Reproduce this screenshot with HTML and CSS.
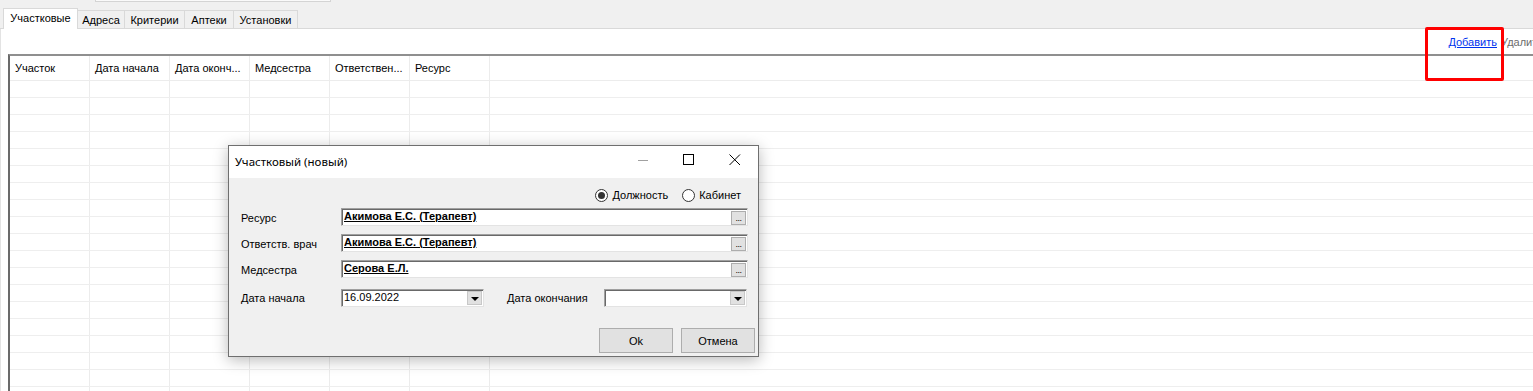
FILE: index.html
```html
<!DOCTYPE html>
<html lang="ru">
<head>
<meta charset="utf-8">
<title>Участковые</title>
<link rel="stylesheet" href="styles.css">
</head>
<body>
<div class="top">
  <div class="frag"></div>
  <div class="tabs">
    <div class="tab active">Участковые</div>
    <div class="tab w47">Адреса</div>
    <div class="tab w60">Критерии</div>
    <div class="tab w49">Аптеки</div>
    <div class="tab w64">Установки</div>
  </div>
</div>
<div class="page">
  <div class="toolbar">
    <a class="link" href="#">Добавить</a>
    <span class="link-dis">Удалить</span>
  </div>
  <div class="grid">
    <div class="row head">
      <div class="cell">Участок</div>
      <div class="cell">Дата начала</div>
      <div class="cell">Дата оконч...</div>
      <div class="cell">Медсестра</div>
      <div class="cell">Ответствен...</div>
      <div class="cell">Ресурс</div>
      <div class="fill"></div>
    </div>
    <div class="row"><div class="cell"></div><div class="cell"></div><div class="cell"></div><div class="cell"></div><div class="cell"></div><div class="cell"></div><div class="fill"></div></div>
    <div class="row"><div class="cell"></div><div class="cell"></div><div class="cell"></div><div class="cell"></div><div class="cell"></div><div class="cell"></div><div class="fill"></div></div>
    <div class="row"><div class="cell"></div><div class="cell"></div><div class="cell"></div><div class="cell"></div><div class="cell"></div><div class="cell"></div><div class="fill"></div></div>
    <div class="row"><div class="cell"></div><div class="cell"></div><div class="cell"></div><div class="cell"></div><div class="cell"></div><div class="cell"></div><div class="fill"></div></div>
    <div class="row"><div class="cell"></div><div class="cell"></div><div class="cell"></div><div class="cell"></div><div class="cell"></div><div class="cell"></div><div class="fill"></div></div>
    <div class="row"><div class="cell"></div><div class="cell"></div><div class="cell"></div><div class="cell"></div><div class="cell"></div><div class="cell"></div><div class="fill"></div></div>
    <div class="row"><div class="cell"></div><div class="cell"></div><div class="cell"></div><div class="cell"></div><div class="cell"></div><div class="cell"></div><div class="fill"></div></div>
    <div class="row"><div class="cell"></div><div class="cell"></div><div class="cell"></div><div class="cell"></div><div class="cell"></div><div class="cell"></div><div class="fill"></div></div>
    <div class="row"><div class="cell"></div><div class="cell"></div><div class="cell"></div><div class="cell"></div><div class="cell"></div><div class="cell"></div><div class="fill"></div></div>
    <div class="row"><div class="cell"></div><div class="cell"></div><div class="cell"></div><div class="cell"></div><div class="cell"></div><div class="cell"></div><div class="fill"></div></div>
    <div class="row"><div class="cell"></div><div class="cell"></div><div class="cell"></div><div class="cell"></div><div class="cell"></div><div class="cell"></div><div class="fill"></div></div>
    <div class="row"><div class="cell"></div><div class="cell"></div><div class="cell"></div><div class="cell"></div><div class="cell"></div><div class="cell"></div><div class="fill"></div></div>
    <div class="row"><div class="cell"></div><div class="cell"></div><div class="cell"></div><div class="cell"></div><div class="cell"></div><div class="cell"></div><div class="fill"></div></div>
    <div class="row"><div class="cell"></div><div class="cell"></div><div class="cell"></div><div class="cell"></div><div class="cell"></div><div class="cell"></div><div class="fill"></div></div>
    <div class="row"><div class="cell"></div><div class="cell"></div><div class="cell"></div><div class="cell"></div><div class="cell"></div><div class="cell"></div><div class="fill"></div></div>
    <div class="row"><div class="cell"></div><div class="cell"></div><div class="cell"></div><div class="cell"></div><div class="cell"></div><div class="cell"></div><div class="fill"></div></div>
    <div class="row"><div class="cell"></div><div class="cell"></div><div class="cell"></div><div class="cell"></div><div class="cell"></div><div class="cell"></div><div class="fill"></div></div>
    <div class="row"><div class="cell"></div><div class="cell"></div><div class="cell"></div><div class="cell"></div><div class="cell"></div><div class="cell"></div><div class="fill"></div></div>
    <div class="row"><div class="cell"></div><div class="cell"></div><div class="cell"></div><div class="cell"></div><div class="cell"></div><div class="cell"></div><div class="fill"></div></div>
  </div>
</div>

<div class="highlight"></div>

<div class="dialog">
  <div class="titlebar">
    <div class="title">Участковый (новый)</div>
    <div class="wbtn"><svg width="12" height="12" viewBox="0 0 12 12"><line x1="1" y1="6.5" x2="11" y2="6.5" stroke="#a0a0a0" stroke-width="1"/></svg></div>
    <div class="wbtn"><svg width="12" height="12" viewBox="0 0 12 12"><rect x="0.5" y="0.5" width="10" height="10" fill="none" stroke="#000" stroke-width="1"/></svg></div>
    <div class="wbtn"><svg width="12" height="12" viewBox="0 0 12 12"><path d="M0.5 0.5 L11 11 M11 0.5 L0.5 11" stroke="#000" stroke-width="1"/></svg></div>
  </div>
  <div class="dbody">
    <div class="radios">
      <span class="radio checked"></span><span class="rlabel">Должность</span>
      <span class="radio r2"></span><span class="rlabel">Кабинет</span>
    </div>
    <div class="frow">
      <div class="flabel">Ресурс</div>
      <div class="field"><span class="ftext">Акимова Е.С. (Терапевт)</span><span class="ellip">...</span></div>
    </div>
    <div class="frow">
      <div class="flabel">Ответств. врач</div>
      <div class="field"><span class="ftext">Акимова Е.С. (Терапевт)</span><span class="ellip">...</span></div>
    </div>
    <div class="frow">
      <div class="flabel">Медсестра</div>
      <div class="field"><span class="ftext">Серова Е.Л.</span><span class="ellip">...</span></div>
    </div>
    <div class="drow">
      <div class="flabel mid">Дата начала</div>
      <div class="combo"><span class="ctext">16.09.2022</span><span class="drop"><i class="tri"></i></span></div>
      <div class="flabel mid l2">Дата окончания</div>
      <div class="combo"><span class="ctext"></span><span class="drop"><i class="tri"></i></span></div>
    </div>
    <div class="buttons">
      <div class="btn">Ok</div>
      <div class="btn">Отмена</div>
    </div>
  </div>
</div>
</body>
</html>
```

FILE: styles.css
```css
* { box-sizing: border-box; }
html, body { margin: 0; padding: 0; }
body {
  width: 1533px;
  height: 391px;
  overflow: hidden;
  position: relative;
  background: #fff;
  font-family: "Liberation Sans", Arial, sans-serif;
  font-size: 11px;
  color: #000;
}
.top {
  height: 29px;
  background: #f0f0f0;
  border-bottom: 1px solid #d9d9d9;
  display: flex;
  flex-direction: column;
  justify-content: space-between;
}
.frag {
  margin-left: 95px;
  width: 236px;
  height: 2px;
  background: #fafafa;
  border: 1px solid #d4d4d4;
  border-top: none;
}
.tabs {
  display: flex;
  align-items: flex-end;
  padding-left: 3px;
}
.tab {
  height: 18px;
  border: 1px solid #d9d9d9;
  border-bottom: none;
  border-left: none;
  background: #f0f0f0;
  display: flex;
  align-items: center;
  justify-content: center;
  padding-top: 1px;
  line-height: 13px;
}
.tab.active {
  width: 75px;
  height: 21px;
  margin-bottom: -1px;
  background: #fff;
  border-left: 1px solid #d9d9d9;
  padding-top: 0;
  padding-bottom: 2px;
  position: relative;
}
.w47 { width: 47px; }
.w60 { width: 60px; }
.w49 { width: 49px; }
.w64 { width: 64px; }

.page {
  border-left: 1px solid #e3e3e3;
}
.toolbar {
  height: 25px;
  display: flex;
  align-items: center;
  justify-content: flex-end;
  gap: 4px;
  margin-right: -10px;
  white-space: nowrap;
  padding-top: 1px;
}
.link { color: #0033ee; text-decoration: underline; }
.link-dis { color: #6d6d6d; }

.grid {
  margin-left: 7px;
  border-top: 2px solid #8f8f8f;
  border-left: 2px solid #6a6a6a;
}
.row {
  display: flex;
  height: 17px;
  border-bottom: 1px solid #eeeeee;
}
.row.head {
  height: 25px;
  border-bottom: 1px solid #ececec;
}
.cell {
  width: 80px;
  flex: none;
  border-right: 1px solid #ececec;
  padding-left: 5px;
  display: flex;
  align-items: center;
  white-space: nowrap;
  overflow: hidden;
}
.head .cell { padding-top: 0; }
.fill { flex: 1; }

.highlight {
  position: absolute;
  left: 1425px;
  top: 27px;
  width: 79px;
  height: 54px;
  border: 3px solid #ff0000;
  border-radius: 2px;
}

.dialog {
  position: absolute;
  left: 228px;
  top: 145px;
  width: 531px;
  border: 1px solid #6f6f6f;
  background: #f0f0f0;
  box-shadow: 0 3px 14px rgba(0, 0, 0, 0.28);
}
.titlebar {
  height: 32px;
  background: #fff;
  display: flex;
  align-items: center;
}
.title {
  flex: 1;
  padding-left: 6px;
  font-family: "Noto Sans", "Open Sans", sans-serif;
  font-size: 11.5px;
  padding-bottom: 2px;
}
.wbtn {
  width: 46px;
  height: 32px;
  display: flex;
  align-items: center;
  justify-content: center;
  padding-bottom: 5px;
}
.wbtn svg { display: block; }

.dbody {
  padding: 10px 10px 3px 12px;
}
.radios {
  height: 14px;
  margin-bottom: 6px;
  display: flex;
  align-items: center;
  justify-content: flex-end;
  padding-right: 7px;
}
.radio {
  width: 13px;
  height: 13px;
  border: 1px solid #333;
  border-radius: 50%;
  background: #fff;
  display: flex;
  align-items: center;
  justify-content: center;
  margin-right: 4px;
}
.radio.checked::after {
  content: "";
  width: 7px;
  height: 7px;
  border-radius: 50%;
  background: #333;
}
.radio.r2 { margin-left: 14px; }
.rlabel { line-height: 13px; }

.frow {
  display: flex;
  height: 18px;
  margin-bottom: 8px;
}
.frow:nth-of-type(4) { margin-bottom: 11px; }
.flabel {
  width: 100px;
  flex: none;
  padding-top: 4px;
  line-height: 13px;
  white-space: nowrap;
}
.flabel.mid { padding-top: 3px; }
.flabel.l2 { width: 97px; margin-left: 23px; }
.field, .combo {
  display: flex;
  align-items: flex-start;
  background: #fff;
  border-top: 1px solid #a0a0a0;
  border-left: 1px solid #a0a0a0;
  border-right: 1px solid #e3e3e3;
  border-bottom: 1px solid #e3e3e3;
  box-shadow: inset 1px 1px 0 #696969;
  height: 18px;
}
.field { flex: 1; }
.ftext {
  flex: 1;
  font-weight: bold;
  text-decoration: underline;
  padding-left: 2px;
  line-height: 15px;
  white-space: nowrap;
}
.ellip {
  width: 15px;
  height: 14px;
  margin-top: 2px;
  margin-right: 1px;
  background: #e1e1e1;
  border: 1px solid #adadad;
  font-size: 9px;
  line-height: 13px;
  text-align: center;
  color: #000;
  letter-spacing: -0.5px;
}
.drow {
  display: flex;
  height: 18px;
}
.combo { width: 143px; flex: none; }
.ctext {
  flex: 1;
  padding-left: 2px;
  line-height: 15px;
}
.drop {
  width: 15px;
  height: 14px;
  margin-top: 1px;
  margin-right: 1px;
  background: #e1e1e1;
  border: 1px solid #c8c8c8;
  display: flex;
  align-items: center;
  justify-content: center;
}
.tri {
  width: 0;
  height: 0;
  border-left: 4px solid transparent;
  border-right: 4px solid transparent;
  border-top: 4px solid #000;
  margin-top: 2px;
}
.buttons {
  display: flex;
  justify-content: flex-end;
  gap: 8px;
  margin-top: 21px;
  margin-right: -7px;
}
.btn {
  width: 74px;
  height: 25px;
  background: #e1e1e1;
  border: 1px solid #adadad;
  display: flex;
  align-items: center;
  justify-content: center;
  font-size: 11px;
}
```
